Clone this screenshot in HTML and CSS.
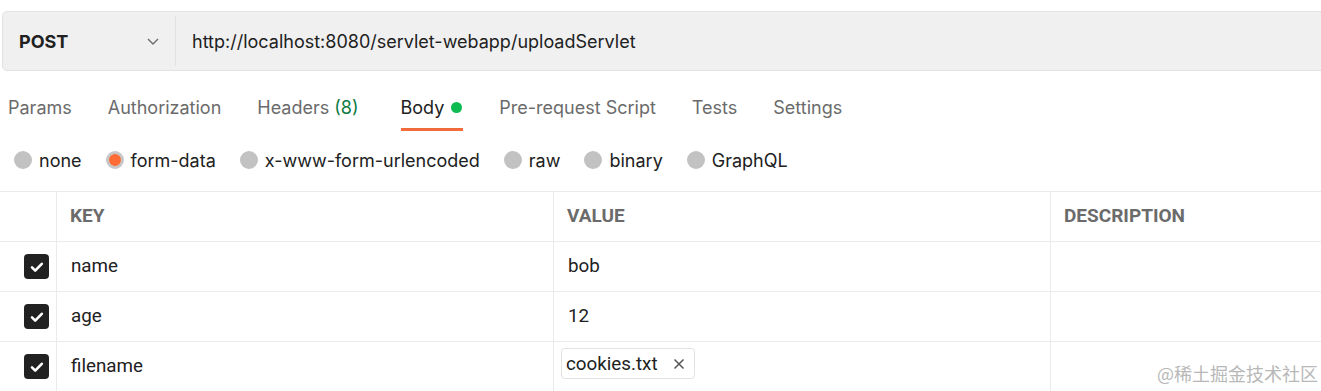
FILE: index.html
```html
<!DOCTYPE html>
<html lang="en">
<head>
    <meta charset="UTF-8">
    <title>Request</title>
    <link rel="stylesheet" href="styles.css">
</head>
<body>

    <div class="url-bar">
        <div class="method">
            <span>POST</span>
            <svg class="chevron" width="16" height="16" viewBox="0 0 16 16"><path d="M3 6l5 5 5-5" fill="none" stroke="#6b6b6b" stroke-width="1.4"/></svg>
        </div>
        <div class="url">http://localhost:8080/servlet-webapp/uploadServlet</div>
    </div>

    <div class="tabs">
        <div class="tab">Params</div>
        <div class="tab">Authorization</div>
        <div class="tab">Headers <span class="count">(8)</span></div>
        <div class="tab active">Body <span class="dot"></span></div>
        <div class="tab">Pre-request Script</div>
        <div class="tab">Tests</div>
        <div class="tab">Settings</div>
    </div>

    <div class="body-types">
        <label class="radio"><span class="circle"></span>none</label>
        <label class="radio"><span class="circle checked"></span>form-data</label>
        <label class="radio"><span class="circle"></span>x-www-form-urlencoded</label>
        <label class="radio"><span class="circle"></span>raw</label>
        <label class="radio"><span class="circle"></span>binary</label>
        <label class="radio"><span class="circle"></span>GraphQL</label>
    </div>

    <div class="table">
        <div class="row head">
            <div class="cell check"></div>
            <div class="cell">KEY</div>
            <div class="cell">VALUE</div>
            <div class="cell">DESCRIPTION</div>
        </div>
        <div class="row">
            <div class="cell check"><span class="box"><svg width="16" height="16" viewBox="0 0 16 16"><path d="M3 8.4l3.2 3.2 6.6-6.8" fill="none" stroke="#fff" stroke-width="2.6" stroke-linecap="round" stroke-linejoin="round"/></svg></span></div>
            <div class="cell">name</div>
            <div class="cell">bob</div>
            <div class="cell"></div>
        </div>
        <div class="row">
            <div class="cell check"><span class="box"><svg width="16" height="16" viewBox="0 0 16 16"><path d="M3 8.4l3.2 3.2 6.6-6.8" fill="none" stroke="#fff" stroke-width="2.6" stroke-linecap="round" stroke-linejoin="round"/></svg></span></div>
            <div class="cell">age</div>
            <div class="cell">12</div>
            <div class="cell"></div>
        </div>
        <div class="row">
            <div class="cell check"><span class="box"><svg width="16" height="16" viewBox="0 0 16 16"><path d="M3 8.4l3.2 3.2 6.6-6.8" fill="none" stroke="#fff" stroke-width="2.6" stroke-linecap="round" stroke-linejoin="round"/></svg></span></div>
            <div class="cell">filename</div>
            <div class="cell file-cell">
                <span class="file">cookies.txt
                    <svg class="remove" width="14" height="14" viewBox="0 0 14 14"><path d="M2.5 2.5l9 9M11.5 2.5l-9 9" stroke="#555" stroke-width="1.5"/></svg>
                </span>
            </div>
            <div class="cell"></div>
        </div>
        <div class="watermark">@稀土掘金技术社区</div>
    </div>

</body>
</html>
```

FILE: styles.css
```css
body {
    margin: 0;
    padding: 11px 0 0 2px;
    font-family: Inter, "Noto Sans", sans-serif;
    color: #212121;
    background-color: #ffffff;
    overflow: hidden;
}
.url-bar {
    display: flex;
    height: 58px;
    width: 1330px;
    background-color: #f0f0f0;
    border: 1px solid #e2e2e2;
    border-radius: 5px;
}
.method {
    width: 173px;
    padding: 0 14px 0 16px;
    display: flex;
    align-items: center;
    justify-content: space-between;
    border-right: 1px solid #e2e2e2;
    margin: 4px 0;
    font-weight: 700;
    font-size: 18px;
    box-sizing: border-box;
}
.url {
    display: flex;
    align-items: center;
    padding-left: 16px;
    font-size: 18px;
}
.tabs {
    display: flex;
    gap: 36px;
    margin-top: 12px;
    padding-left: 6px;
    height: 48px;
}
.tab {
    font-size: 18px;
    color: #6b6b6b;
    height: 48px;
    box-sizing: border-box;
    display: flex;
    align-items: center;
    gap: 5px;
}
.count {
    color: #0c7a43;
}
.tab.active {
    color: #212121;
    border-bottom: 3px solid #f26b3a;
    padding-top: 3px;
    margin-left: 6px;
    gap: 7px;
    padding-right: 1px;
}
.dot {
    width: 11px;
    height: 11px;
    border-radius: 50%;
    background-color: #0cbb52;
    display: inline-block;
}
.body-types {
    display: flex;
    gap: 24px;
    padding-left: 12px;
    height: 40px;
    align-items: center;
    margin-top: 9px;
    margin-bottom: 11px;
}
.radio {
    display: flex;
    align-items: center;
    gap: 7px;
    font-size: 18px;
    color: #212121;
}
.circle {
    width: 18px;
    height: 18px;
    border-radius: 50%;
    background-color: #c2c2c2;
    display: inline-block;
    box-sizing: border-box;
}
.circle.checked {
    background-color: #ff6c37;
    border: 3px solid #c7c7c7;
}
.table {
    margin-left: -2px;
    border-top: 1px solid #ebebeb;
    position: relative;
    width: 1330px;
}
.row {
    display: grid;
    grid-template-columns: 57px 497px 497px 1fr;
    height: 50px;
    box-sizing: border-box;
    border-bottom: 1px solid #ebebeb;
}
.cell {
    display: flex;
    align-items: center;
    padding-left: 14px;
    padding-bottom: 2px;
    border-right: 1px solid #ebebeb;
    font-family: Roboto, "Liberation Sans", sans-serif;
    font-size: 18.8px;
    color: #212121;
}
.head .cell {
    font-weight: 700;
    font-size: 19px;
    color: #6b6b6b;
    padding-left: 13px;
}
.cell.check {
    padding-left: 24px;
    padding-bottom: 0;
}
.box {
    width: 25px;
    height: 25px;
    border-radius: 4px;
    background-color: #212121;
    display: flex;
    align-items: center;
    justify-content: center;
}
.file-cell {
    padding-left: 7px;
}
.file {
    display: inline-flex;
    align-items: center;
    gap: 14px;
    border: 1px solid #e2e2e2;
    border-radius: 4px;
    height: 29px;
    padding: 0 8px 0 4px;
    margin-top: -4px;
}
.watermark {
    position: absolute;
    right: 12px;
    bottom: 6px;
    font-family: "Noto Sans CJK SC", sans-serif;
    font-size: 18px;
    color: #b8b8b8;
}
```
